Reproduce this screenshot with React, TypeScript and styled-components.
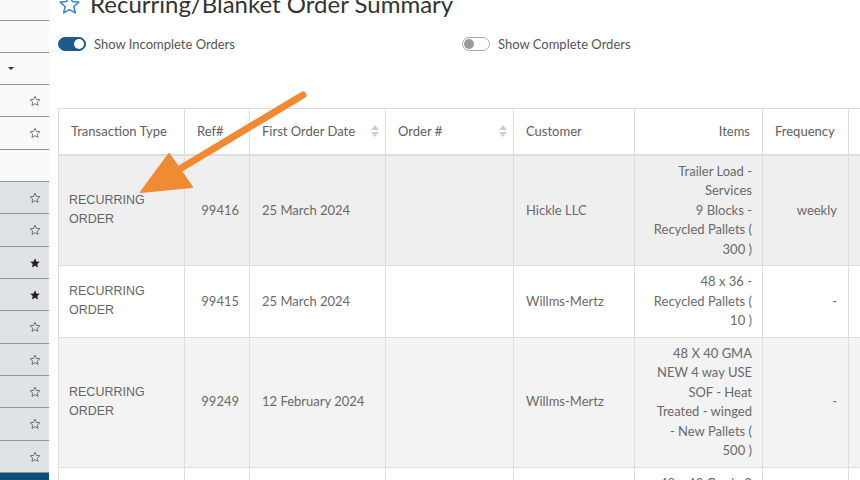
import React from 'react'
import styled, { createGlobalStyle } from 'styled-components'

const GlobalStyle = createGlobalStyle`
  html, body {
    margin: 0;
    padding: 0;
    overflow: hidden;
    background: #fff;
    font-family: Lato, "Open Sans", sans-serif;
  }
`

const Page = styled.div`
  position: relative;
  display: flex;
  width: 860px;
  height: 480px;
  overflow: hidden;
`

const Sidebar = styled.div`
  width: 49px;
  flex-shrink: 0;
  display: flex;
  flex-direction: column;
  background: #fafafa;
`

const SideRow = styled.div<{ $h: number; $shade?: boolean }>`
  height: ${({ $h }) => $h}px;
  flex-shrink: 0;
  box-sizing: border-box;
  border-bottom: 1px solid #8e9399;
  background: ${({ $shade }) => ($shade ? '#dfe3e8' : 'transparent')};
  display: flex;
  align-items: center;
  justify-content: flex-end;
  padding-right: 8px;
  color: #333;
`

const SideCaret = styled.span`
  margin-right: auto;
  margin-left: 8px;
  width: 0;
  height: 0;
  border-left: 3px solid transparent;
  border-right: 3px solid transparent;
  border-top: 3px solid #333;
`

const SideFoot = styled.div`
  flex: 1;
  background: #0d4d7c;
`

const Main = styled.div`
  flex: 1;
  padding-left: 9px;
  display: flex;
  flex-direction: column;
  min-width: 0;
`

const TitleRow = styled.div`
  display: flex;
  align-items: center;
  gap: 9px;
  margin-top: -11px;
  height: 30px;
`

const Title = styled.h1`
  margin: 0;
  font-size: 24px;
  font-weight: 400;
  color: #333;
  line-height: 30px;
  white-space: nowrap;
`

const ToggleRow = styled.div`
  display: flex;
  align-items: center;
  margin-top: 17px;
  height: 16px;
`

const ToggleItem = styled.div<{ $w: number }>`
  display: flex;
  align-items: center;
  gap: 8px;
  width: ${({ $w }) => $w}px;
  font-size: 13px;
  color: #555;
`

const Track = styled.span<{ $on?: boolean }>`
  position: relative;
  width: 28px;
  height: 14px;
  box-sizing: border-box;
  border-radius: 8px;
  background: ${({ $on }) => ($on ? '#1d5a8e' : '#fff')};
  border: 1px solid ${({ $on }) => ($on ? '#1d5a8e' : '#aaa')};
`

const Knob = styled.span<{ $on?: boolean }>`
  position: absolute;
  top: 1px;
  ${({ $on }) => ($on ? 'right: 1px;' : 'left: 1px;')}
  width: 10px;
  height: 10px;
  border-radius: 50%;
  background: ${({ $on }) => ($on ? '#fff' : '#9a9a9a')};
`

const Table = styled.table`
  margin-top: 56px;
  width: 900px;
  border-collapse: collapse;
  table-layout: fixed;
  font-size: 13px;
  color: #6a6a6a;
`

const Th = styled.th<{ $right?: boolean }>`
  height: 46px;
  box-sizing: border-box;
  padding: 0 12px;
  font-weight: 400;
  text-align: ${({ $right }) => ($right ? 'right' : 'left')};
  border: 1px solid #dedede;
  border-bottom: 2px solid #dedede;
  color: #606060;
  position: relative;
  white-space: nowrap;
`

const SortIcon = styled.span`
  position: absolute;
  right: 6px;
  top: 50%;
  transform: translateY(-50%);
  display: flex;
  flex-direction: column;
  gap: 2px;
  &::before,
  &::after {
    content: '';
    width: 0;
    height: 0;
    border-left: 4px solid transparent;
    border-right: 4px solid transparent;
  }
  &::before {
    border-bottom: 5px solid #cfcfcf;
  }
  &::after {
    border-top: 5px solid #cfcfcf;
  }
`

const Tr = styled.tr<{ $shade?: string }>`
  background: ${({ $shade }) => $shade || '#fff'};
`

const Td = styled.td<{ $align?: string; $pr?: number }>`
  padding: 6px ${({ $pr }) => $pr ?? 12}px 6px 12px;
  line-height: 19.5px;
  vertical-align: middle;
  text-align: ${({ $align }) => $align || 'left'};
  border: 1px solid #dedede;
  border-top: none;
`

const TypeText = styled.span`
  display: block;
  font-family: "Liberation Sans", Arial, sans-serif;
  font-size: 12.5px;
  color: #666;
  margin-left: -2px;
`

const Line = styled.span`
  display: block;
  white-space: nowrap;
`

const Overlay = styled.svg`
  position: absolute;
  left: 0;
  top: 0;
  pointer-events: none;
`

const StarOutline = ({ size = 12, color = '#555' }: { size?: number; color?: string }) => (
  <svg width={size} height={size} viewBox="0 0 24 24" fill="none" stroke={color} strokeWidth={1.6} strokeLinejoin="round">
    <path d="M12 2.5l2.9 6.3 6.8.7-5.1 4.6 1.5 6.7L12 17.3l-6.1 3.5 1.5-6.7L2.3 9.5l6.8-.7z" />
  </svg>
)

const StarSolid = ({ size = 12 }: { size?: number }) => (
  <svg width={size} height={size} viewBox="0 0 24 24" fill="#222">
    <path d="M12 2.5l2.9 6.3 6.8.7-5.1 4.6 1.5 6.7L12 17.3l-6.1 3.5 1.5-6.7L2.3 9.5l6.8-.7z" />
  </svg>
)

const sideRows: { h: number; shade?: boolean; icon?: 'o' | 's' | 'caret' }[] = [
  { h: 21 },
  { h: 32 },
  { h: 32, icon: 'caret' },
  { h: 32, icon: 'o' },
  { h: 33, icon: 'o' },
  { h: 32 },
  { h: 32, shade: true, icon: 'o' },
  { h: 33, shade: true, icon: 'o' },
  { h: 32, shade: true, icon: 's' },
  { h: 32, shade: true, icon: 's' },
  { h: 33, shade: true, icon: 'o' },
  { h: 32, shade: true, icon: 'o' },
  { h: 32, shade: true, icon: 'o' },
  { h: 33, shade: true, icon: 'o' },
  { h: 32, shade: true, icon: 'o' },
]

const rows = [
  {
    ref: '99416',
    date: '25 March 2024',
    customer: 'Hickle LLC',
    items: ['Trailer Load -', 'Services', '9 Blocks -', 'Recycled Pallets (', '300 )'],
    freq: 'weekly',
    shade: '#efefef',
  },
  {
    ref: '99415',
    date: '25 March 2024',
    customer: 'Willms-Mertz',
    items: ['48 x 36 -', 'Recycled Pallets (', '10 )'],
    freq: '-',
  },
  {
    ref: '99249',
    date: '12 February 2024',
    customer: 'Willms-Mertz',
    items: ['48 X 40 GMA', 'NEW 4 way USE', 'SOF - Heat', 'Treated - winged', '- New Pallets (', '500 )'],
    freq: '-',
    shade: '#f3f3f3',
  },
  {
    ref: '99101',
    date: '5 February 2024',
    customer: 'Willms-Mertz',
    items: ['48 x 40 Grade 2', '- Recycled', 'Pallets ( 200 )'],
    freq: '-',
  },
]

export default function App() {
  return (
    <>
      <GlobalStyle />
      <Page>
        <Sidebar>
          {sideRows.map((r, i) => (
            <SideRow key={i} $h={r.h} $shade={r.shade}>
              {r.icon === 'caret' && <SideCaret />}
              {r.icon === 'o' && <StarOutline />}
              {r.icon === 's' && <StarSolid />}
            </SideRow>
          ))}
          <SideFoot />
        </Sidebar>
        <Main>
          <TitleRow>
            <StarOutline size={23} color="#3d86c6" />
            <Title>Recurring/Blanket Order Summary</Title>
          </TitleRow>
          <ToggleRow>
            <ToggleItem $w={404}>
              <Track $on>
                <Knob $on />
              </Track>
              Show Incomplete Orders
            </ToggleItem>
            <ToggleItem $w={200}>
              <Track>
                <Knob />
              </Track>
              Show Complete Orders
            </ToggleItem>
          </ToggleRow>
          <Table>
            <colgroup>
              <col style={{ width: 126 }} />
              <col style={{ width: 65 }} />
              <col style={{ width: 136 }} />
              <col style={{ width: 128 }} />
              <col style={{ width: 121 }} />
              <col style={{ width: 128 }} />
              <col style={{ width: 86 }} />
              <col style={{ width: 110 }} />
            </colgroup>
            <thead>
              <tr>
                <Th>Transaction Type</Th>
                <Th>Ref#</Th>
                <Th>
                  First Order Date
                  <SortIcon />
                </Th>
                <Th>
                  Order #
                  <SortIcon />
                </Th>
                <Th>Customer</Th>
                <Th $right>Items</Th>
                <Th>Frequency</Th>
                <Th />
              </tr>
            </thead>
            <tbody>
              {rows.map((r) => (
                <Tr key={r.ref} $shade={r.shade}>
                  <Td>
                    <TypeText>
                      RECURRING
                      <br />
                      ORDER
                    </TypeText>
                  </Td>
                  <Td $align="right" $pr={10}>{r.ref}</Td>
                  <Td>{r.date}</Td>
                  <Td />
                  <Td $align="left">{r.customer}</Td>
                  <Td $align="right" $pr={10}>
                    {r.items.map((l, i) => (
                      <Line key={i}>{l}</Line>
                    ))}
                  </Td>
                  <Td $align="right" $pr={11}>{r.freq}</Td>
                  <Td />
                </Tr>
              ))}
            </tbody>
          </Table>
        </Main>
        <Overlay width={860} height={480} viewBox="0 0 860 480">
          <line x1={303} y1={95} x2={178} y2={170} stroke="#f08a33" strokeWidth={7} strokeLinecap="round" />
          <polygon points="141,192 169,154 192,187" fill="#f08a33" stroke="#f08a33" strokeWidth={2} strokeLinejoin="round" />
        </Overlay>
      </Page>
    </>
  )
}
